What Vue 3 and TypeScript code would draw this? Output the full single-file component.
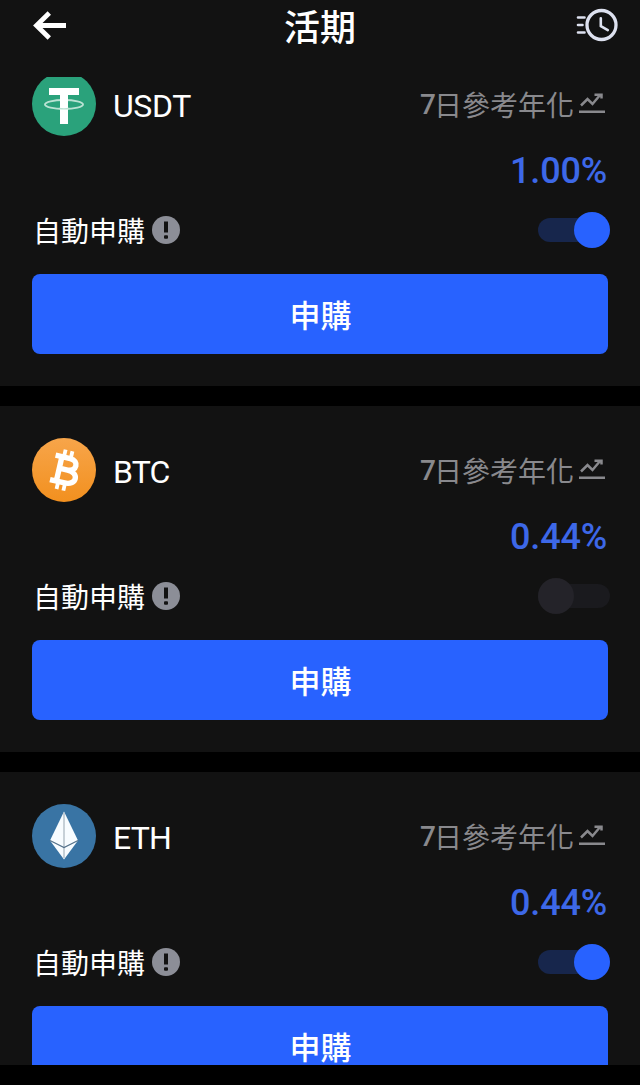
<script setup lang="ts">
import { ref } from 'vue'

interface Product {
  symbol: string
  rate: string
  auto: boolean
}

const products = ref<Product[]>([
  { symbol: 'USDT', rate: '1.00%', auto: true },
  { symbol: 'BTC', rate: '0.44%', auto: false },
  { symbol: 'ETH', rate: '0.44%', auto: true },
])
</script>

<template>
  <div class="screen">
    <header class="topbar">
      <svg class="back" viewBox="0 0 36 32" width="36" height="32">
        <path d="M17.300 4 4.500 16.500 17.300 29M5 16.500H34" fill="none" stroke="#fff" stroke-width="4.800" />
      </svg>
      <h1 class="title">活期</h1>
      <svg class="history" viewBox="0 0 44 34" width="44" height="34" fill="none" stroke="#dde1ef" stroke-linecap="round">
        <circle cx="27.500" cy="17" r="14.500" stroke-width="3.300" />
        <path d="M26.800 10.300V18.200L33.800 22.200" stroke-width="2.600" stroke-linejoin="round" />
        <path d="M4 9.500H10.500M4 17H8.500M4 24.500H10.500" stroke-width="2.600" />
      </svg>
    </header>

    <main class="viewport">
      <div class="list">
        <section v-for="p in products" :key="p.symbol" class="card">
          <div class="head">
            <svg v-if="p.symbol === 'USDT'" class="coin" viewBox="0 0 64 64">
              <circle cx="32" cy="32" r="32" fill="#2aa27b" />
              <ellipse cx="32" cy="32.500" rx="19" ry="4.500" fill="none" stroke="#b9e2d3" stroke-width="1.900" />
              <path d="M17 16H47V23H36V52H28V23H17Z" fill="#fff" />
              <path d="M27 36.500Q32 37.300 37 36.500" fill="none" stroke="#b9e2d3" stroke-width="1.300" />
            </svg>
            <svg v-else-if="p.symbol === 'BTC'" class="coin" viewBox="0 0 64 64">
              <defs>
                <linearGradient id="btc-fill" x1="0" y1="0" x2="0" y2="1">
                  <stop offset="0" stop-color="#f7a54a" />
                  <stop offset="1" stop-color="#f2901f" />
                </linearGradient>
              </defs>
              <circle cx="32" cy="32" r="32" fill="url(#btc-fill)" />
              <g transform="rotate(13 32 32)" fill="none" stroke="#fff">
                <path d="M20.500 19.500H35.500C45 19.500 45 31.200 35.500 31.200H27M35.500 31.200C48 31.200 48 44.500 35.500 44.500H20.500M27 19.500V44.500" stroke-width="5.400" />
                <path d="M29 11.800V19M36 11.800V19M29 45V52.200M36 45V52.200" stroke-width="3.800" />
              </g>
            </svg>
            <svg v-else class="coin" viewBox="0 0 64 64">
              <circle cx="32" cy="32" r="32" fill="#3974a4" />
              <path d="M32 7.500 46 36.500 32 55.500 18 36.500Z" fill="#f7fcff" />
              <path d="M32 9V54" stroke="#a5b3bd" stroke-width="1.200" />
              <path d="M18 36.500 32 43.500 46 36.500" fill="none" stroke="#53718a" stroke-width="1.200" />
            </svg>
            <span class="symbol" :class="p.symbol.toLowerCase()">{{ p.symbol }}</span>
            <span class="caption"><span class="days">7</span>日參考年化</span>
            <svg class="trend" viewBox="0 0 28 24" width="28" height="24" fill="none" stroke="#89898d" stroke-width="2.500">
              <path d="M3 13.500 9.500 7 14.500 12 22.500 2.500M16.500 2.800H23.500V6.500M1 19.800H27" />
            </svg>
          </div>
          <div class="rate">{{ p.rate }}</div>
          <div class="auto">
            <span class="auto-label">自動申購</span>
            <svg class="info" viewBox="0 0 28 28" width="28" height="28">
              <circle cx="14" cy="14" r="14" fill="#8c8e97" />
              <path d="M12 5.500H16V16.500H12Z" fill="#121212" />
              <rect x="12" y="19.200" width="4" height="3.600" rx="1" fill="#121212" />
            </svg>
            <button class="switch" :class="{ on: p.auto }" role="switch" :aria-checked="p.auto" @click="p.auto = !p.auto">
              <span class="knob"></span>
            </button>
          </div>
          <button class="subscribe">申購</button>
        </section>
      </div>
    </main>
  </div>
</template>

<style>
body {
  margin: 0;
  background: #000;
}
</style>

<style scoped>
.screen {
  width: 640px;
  height: 1085px;
  overflow: hidden;
  background: #000;
  color: #fff;
  font-family: Roboto, "Noto Sans CJK TC", sans-serif;
}
.topbar {
  box-sizing: border-box;
  height: 77px;
  padding: 0 22px 27px 32px;
  display: grid;
  grid-template-columns: 1fr auto 1fr;
  align-items: center;
  background: #121212;
}
.title {
  margin: 0 0 0 -10px;
  font: 500 36px/50px "Noto Sans CJK TC", sans-serif;
}
.history {
  justify-self: end;
}
.viewport {
  height: 988px;
  overflow: hidden;
}
.list {
  margin-top: -37px;
  display: flex;
  flex-direction: column;
  gap: 20px;
}
.card {
  padding: 32px;
  background: #121212;
}
.head {
  height: 64px;
  display: flex;
  align-items: center;
}
.coin {
  width: 64px;
  height: 64px;
}
.symbol {
  margin: 4px auto 0 17px;
  font-size: 32px;
  line-height: 40px;
  letter-spacing: -0.4px;
}
.symbol.btc,
.symbol.eth {
  letter-spacing: -0.8px;
}
.caption {
  display: flex;
  color: #89898d;
  font: 400 28px/40px "Noto Sans CJK TC", sans-serif;
}
.days {
  margin-right: -2px;
  padding-top: 1px;
  font-family: Roboto, sans-serif;
  font-weight: 500;
}
.trend {
  margin: 0 2px 0 4px;
}
.rate {
  height: 70px;
  margin: 0 1px 6px 0;
  line-height: 70px;
  text-align: right;
  font-size: 36px;
  font-weight: 500;
  letter-spacing: -0.2px;
  color: #3d68e8;
}
.auto {
  height: 36px;
  display: flex;
  align-items: center;
}
.auto-label {
  margin-left: 1px;
  font: 400 28px/36px "Noto Sans CJK TC", sans-serif;
}
.info {
  margin-left: 7px;
}
.switch {
  width: 72px;
  height: 24px;
  margin: 0 -2px 0 auto;
  padding: 0;
  display: flex;
  align-items: center;
  border: 0;
  border-radius: 12px;
  background: #1a1a1e;
}
.knob {
  flex: none;
  width: 36px;
  height: 36px;
  border-radius: 50%;
  background: #242329;
}
.switch.on {
  justify-content: flex-end;
  background: #17264c;
}
.on .knob {
  background: #2862ff;
}
.subscribe {
  width: 100%;
  height: 80px;
  margin-top: 26px;
  padding: 0 0 1px 1px;
  display: block;
  border: 0;
  border-radius: 8px;
  background: #2862ff;
  color: #fff;
  font: 500 31px/36px "Noto Sans CJK TC", sans-serif;
}
</style>
